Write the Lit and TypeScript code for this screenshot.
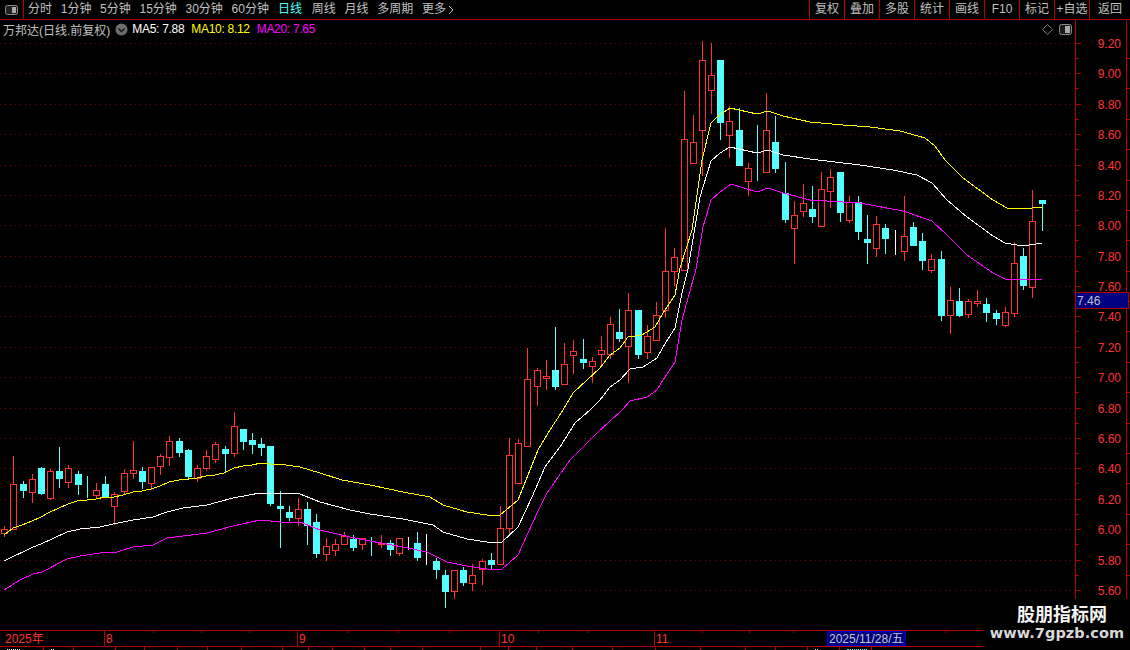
import { LitElement, html, css, svg } from "lit";
import { customElement } from "lit/decorators.js";

type C = [number, number, number, number, string];
const candles: C[] = [
  [526,529,533,536,"r"],[456,484,529,529,"r"],[481,484,490,497,"c"],[474,479,492,502,"r"],[467,468,493,494,"c"],
  [469,471,498,499,"r"],[447,471,478,487,"c"],[465,468,482,487,"r"],[471,474,484,494,"c"],[476,487,488,497,"c"],
  [483,490,495,497,"r"],[476,484,496,497,"c"],[492,494,506,524,"r"],[469,473,491,494,"r"],[441,470,473,478,"r"],
  [467,471,481,488,"c"],[467,467,483,489,"r"],[454,456,466,474,"r"],[436,441,457,465,"r"],[438,441,452,456,"c"],
  [449,450,476,479,"c"],[465,468,478,481,"r"],[450,456,468,470,"r"],[442,444,459,462,"r"],[446,449,453,471,"c"],
  [412,426,453,456,"r"],[429,429,441,449,"c"],[433,440,444,453,"c"],[438,444,447,455,"c"],[446,446,503,505,"c"],
  [491,506,508,547,"c"],[506,512,517,520,"c"],[498,509,518,525,"r"],[502,509,525,544,"c"],[514,522,553,557,"c"],
  [538,546,554,560,"r"],[539,544,550,555,"r"],[532,536,544,544,"r"],[535,539,547,550,"c"],[538,538,544,549,"r"],
  [537,540,541,555,"c"],[535,543,544,547,"r"],[540,543,549,555,"c"],[538,538,553,555,"r"],[537,541,542,549,"w"],
  [532,543,557,560,"c"],[534,557,558,564,"w"],[558,561,569,578,"c"],[570,575,591,607,"c"],[570,570,591,598,"r"],
  [567,570,582,585,"c"],[564,575,583,590,"r"],[559,561,569,584,"r"],[553,560,564,569,"c"],[506,528,564,564,"r"],
  [438,455,528,533,"r"],[439,443,483,483,"r"],[348,379,446,446,"r"],[368,370,386,405,"r"],[360,376,378,389,"r"],
  [327,370,386,389,"c"],[343,364,384,384,"r"],[340,351,355,373,"r"],[339,359,362,368,"c"],[357,361,366,382,"r"],
  [336,350,354,366,"r"],[317,324,354,358,"r"],[309,332,338,341,"c"],[293,310,346,382,"r"],[310,310,354,358,"c"],
  [325,336,352,358,"r"],[302,315,340,340,"r"],[228,271,310,317,"r"],[248,257,271,285,"r"],[91,139,270,270,"r"],
  [115,142,163,163,"r"],[41,60,130,175,"r"],[43,75,90,113,"r"],[60,60,122,139,"c"],[106,121,135,157,"r"],
  [108,130,165,165,"c"],[163,168,181,195,"r"],[125,165,166,180,"c"],[93,130,172,172,"r"],[116,142,168,172,"c"],
  [162,193,219,222,"c"],[201,215,228,263,"r"],[184,203,211,216,"r"],[186,209,216,222,"c"],[172,189,226,226,"r"],
  [169,177,191,207,"r"],[172,172,212,221,"c"],[196,202,220,222,"r"],[196,202,231,239,"c"],[215,239,242,263,"c"],
  [216,224,248,256,"r"],[224,228,238,253,"c"],[230,244,245,254,"w"],[196,236,251,260,"r"],[222,227,245,245,"c"],
  [233,241,260,269,"c"],[254,259,270,272,"r"],[251,259,315,320,"c"],[287,300,315,333,"r"],[288,301,315,316,"c"],
  [299,301,314,317,"r"],[290,301,303,306,"r"],[298,304,312,321,"c"],[310,313,318,324,"c"],[307,312,325,326,"r"],
  [242,263,313,316,"r"],[248,256,285,289,"c"],[190,221,287,297,"r"],[200,200,203,230,"c"],
];

const ma10 = "4,535 13,528 22,525 32,521 41,517 50,512 59,508 68,504 77,501 87,500 96,499 105,497 114,497 123,495 133,492 142,491 151,489 160,486 169,482 179,480 188,479 197,478 206,476 215,475 224,473 234,468 243,466 252,465 261,463 270,464 279,464 300,467 320,473 342,480 370,485 403,492 430,497 443,505 467,512 487,515 500,515 518,500 530,470 538,450 550,430 563,410 573,393 587,380 600,368 610,355 620,348 628,337 642,335 655,327 663,313 675,295 680,268 692,230 702,160 711,123 717,117 730,108 757,114 768,111 783,116 810,122 843,125 870,127 900,131 925,138 935,146 945,160 963,178 993,200 1007,208 1023,209 1042,207";
const ma5 = "4,561 33,547 41,544 67,532 80,529 100,527 113,524 133,520 153,517 167,512 183,508 207,505 233,498 260,493 277,493 300,494 320,502 350,510 370,514 403,519 433,525 443,532 467,539 487,542 502,542 518,527 532,497 545,467 560,447 575,423 590,410 600,400 610,387 620,380 630,369 643,367 657,358 663,347 675,328 682,293 688,269 700,197 711,161 720,153 730,147 757,153 768,150 783,155 810,159 843,163 860,165 893,170 917,175 932,183 947,200 967,217 993,236 1005,243 1023,246 1042,243";
const ma20 = "4,590 20,580 33,574 42,572 67,559 80,556 100,553 117,552 133,547 153,545 167,538 183,536 207,533 233,526 260,520 280,522 300,522 320,530 350,537 370,541 403,547 427,552 447,562 467,566 487,569 502,569 518,555 537,513 547,493 570,460 597,433 622,410 630,401 647,397 657,390 663,380 675,362 682,320 696,269 703,227 711,200 720,192 731,184 757,192 768,188 783,193 810,200 843,202 860,203 903,211 932,221 947,235 967,255 993,273 1005,279 1023,280 1042,279";

const gridYs = [43,73,104,134,165,195,225,256,286,316,347,377,408,438,468,499,529,560,590];
const prices = ["9.20","9.00","8.80","8.60","8.40","8.20","8.00","7.80","7.60","7.40","7.20","7.00","6.80","6.60","6.40","6.20","6.00","5.80","5.60"];
const leftTabs = ["分时","1分钟","5分钟","15分钟","30分钟","60分钟","日线","周线","月线","多周期"];
const rightTabs = ["复权","叠加","多股","统计","画线","F10","标记","+自选","返回"];
const monthLines: [number, string][] = [[104,"8"],[297,"9"],[499,"10"],[654,"11"]];
const timeTicks = [153,201,249,348,398,449,538,587,702,749,793,945];
const tabStops = [43,73,115,144,177,207,241,282,308,332,364,390,422,480,508,536,572,612,655,700,745,775,807,839,871,984];
/* only the top pixel row of the tab captions reaches the photographed area */
const tabTips: Record<number, [number, string]> = { 0: [13, ""], 1: [3, ""], 23: [3, ""], 24: [20, "cy"] };

@customElement("app-root")
export class AppRoot extends LitElement {
  static styles = css`
    :host { display: block; width: 1130px; height: 650px; background: #000; position: relative; overflow: hidden;
      font-family: "Liberation Sans", "Noto Sans CJK SC", sans-serif; font-size: 12px; color: #c0c0c0; }
    .toolbar { display: flex; height: 19px; border-bottom: 1px solid #b00000; align-items: center; }
    .pane { width: 23px; height: 19px; border-right: 1px solid #b00000; display: flex; align-items: center; justify-content: center; flex: none; }
    .tabs { display: flex; gap: 8.7px; margin-left: 4px; line-height: 19px; }
    .tab.on { color: #54ffff; margin: 0 1px 0 .5px; }
    .more { display: flex; align-items: center; gap: 2px; }
    .spacer { flex: 1; }
    .rtabs { display: flex; height: 19px; border-left: 1px solid #b00000; }
    .rtab { width: 34px; border-right: 1px solid #b00000; text-align: center; line-height: 19px; white-space: nowrap; }
    .rtab:last-child { width: 40px; border-right: none; }
    .info { position: absolute; left: 0; top: 20px; width: 1075px; height: 18px; display: flex; align-items: center; box-sizing: border-box; padding: 0 3px; white-space: nowrap; }
    .info .title { margin-right: 5px; }
    .info .m { margin-left: 7px; letter-spacing: -.3px; }
    .info .m.first { margin-left: 4px; }
    .white { color: #fff; } .yellow { color: #ff0; } .magenta { color: #f0f; }
    .info .icons { margin-left: auto; display: flex; align-items: center; gap: 6px; }
    svg { display: block; }
    .grid { stroke: #800000; stroke-width: 1; stroke-dasharray: 1 4; shape-rendering: crispEdges; }
    .axis { stroke: #b00000; stroke-width: 1; fill: none; shape-rendering: crispEdges; }
    .price { fill: #ff3232; font-size: 12px; text-anchor: end; }
    .last { fill: #000080; stroke: #b00000; shape-rendering: crispEdges; }
    .lastt { fill: #c0c0c0; font-size: 12px; }
    .candles { shape-rendering: crispEdges; }
    .r { stroke: #ff3232; fill: none; } .c { stroke: #54ffff; fill: #54ffff; } .w { stroke: #fff; fill: #fff; }
    .ma { fill: none; stroke-width: 1; shape-rendering: crispEdges; }
    .ma.a { stroke: #fff; } .ma.b { stroke: #ff0; } .ma.d { stroke: #f0f; }
    .timeaxis { height: 15px; border-top: 1px solid #b00000; border-bottom: 1px solid #b00000; }
    .tlabel { fill: #ff3232; font-size: 12px; }
    .dbox { fill: #000080; stroke: #0000c8; shape-rendering: crispEdges; }
    .dtext { fill: #c8c8c8; font-size: 12px; }
    .bottom { display: flex; height: 3px; overflow: hidden; }
    .cell { border-right: 1px solid #b00000; box-sizing: border-box; padding: 2px 0 0 7px; flex: none; }
    .tip { display: block; height: 0; border-top: 1px dotted #fff; }
    .tip.cy { border-top-color: #54ffff; }
    .mark { position: absolute; left: 984px; top: 599px; right: 0; bottom: 0; background: #000; display: flex; flex-direction: column; align-items: center; padding-top: 3px; box-sizing: border-box; }
    .mark .cn { font-family: "Noto Sans CJK SC", sans-serif; font-size: 18px; font-weight: 700; color: #f4f4f4; line-height: 22px; padding-left: 10px; }
    .mark .url { font-family: "DejaVu Sans", sans-serif; font-size: 14.5px; font-weight: 700; color: #d8d8d8; line-height: 19px; letter-spacing: .05px; }
  `;

  private cx(i: number) { return Math.round(4.2 + 9.18 * i); }

  private candle(d: C, i: number) {
    const x = this.cx(i) + 0.5;
    const [hi, top, bot, lo, t] = d;
    if (t === "r") {
      return svg`<g class="r">
        <path d="M${x} ${hi}V${top}M${x} ${bot}V${lo + 1}"></path>
        <rect x=${x - 3} y=${top + 0.5} width="6" height=${Math.max(bot - top, 1)}></rect>
      </g>`;
    }
    return svg`<g class=${t}>
      <path d="M${x} ${hi}V${lo + 1}"></path>
      <rect x=${x - 3} y=${top + 0.5} width="6" height=${bot - top - (bot - top > 1 ? 0 : 1)}></rect>
    </g>`;
  }

  render() {
    let prev = 0;
    return html`
      <div class="toolbar">
        <div class="pane">
          <svg width="13" height="10" viewBox="0 0 13 10"><rect x=".5" y=".5" width="12" height="9" rx="2" fill="#222" stroke="#8a8a8a"></rect><rect x="7" y="2" width="4" height="6" fill="#aaa"></rect></svg>
        </div>
        <div class="tabs">
          ${leftTabs.map(t => html`<span class="tab ${t === "日线" ? "on" : ""}">${t}</span>`)}
          <span class="tab more">更多<svg width="6" height="10" viewBox="0 0 6 10"><path d="M1 1l4 4-4 4" fill="none" stroke="#c0c0c0"></path></svg></span>
        </div>
        <div class="spacer"></div>
        <div class="rtabs">${rightTabs.map(t => html`<div class="rtab">${t}</div>`)}</div>
      </div>

      <svg width="1130" height="610" viewBox="0 20 1130 610">
        ${gridYs.map(y => svg`<line class="grid" x1="0" x2="1075" y1=${y + 0.5} y2=${y + 0.5}></line>`)}
        <g class="candles">${candles.map((d, i) => this.candle(d, i))}</g>
        <polyline class="ma a" points=${ma5}></polyline>
        <polyline class="ma b" points=${ma10}></polyline>
        <polyline class="ma d" points=${ma20}></polyline>
        <path class="axis" d="M1075.5 20V630M1126.5 20V630"></path>
        ${gridYs.map((y, i) => svg`
          <path class="axis" d="M1075 ${y + 0.5}H1081M1075 ${y + 15.5}H1079M1126 ${y + 15.5}H1130"></path>
          <text class="price" x="1121" y=${y + 5}>${prices[i]}</text>`)}
        <rect class="last" x="1075.5" y="292.5" width="53" height="16"></rect>
        <text class="lastt" x="1077" y="305">7.46</text>
      </svg>

      <div class="info">
        <span class="title">万邦达(日线.前复权)</span>
        <svg width="13" height="13" viewBox="0 0 13 13"><circle cx="6.5" cy="6.5" r="6" fill="#6e6e6e"></circle><path d="M3.5 5.5l3 3 3-3" fill="none" stroke="#111" stroke-width="1.3"></path></svg>
        <span class="m first white">MA5: 7.88</span>
        <span class="m yellow">MA10: 8.12</span>
        <span class="m magenta">MA20: 7.65</span>
        <span class="icons">
          <svg width="11" height="11" viewBox="0 0 11 11"><path d="M5.5 .5l5 5-5 5-5-5z" fill="none" stroke="#777"></path></svg>
          <svg width="13" height="11" viewBox="0 0 13 11"><rect x=".5" y=".5" width="12" height="10" rx="2" fill="#1a1a1a" stroke="#8a8a8a"></rect><rect x="6" y="2" width="5" height="7" fill="#aaa"></rect></svg>
        </span>
      </div>

      <div class="timeaxis">
        <svg width="1130" height="15" viewBox="0 631 1130 15">
          <text class="tlabel" x="5" y="643">2025年</text>
          ${monthLines.map(([x, t]) => svg`
            <path class="axis" d="M${x + 0.5} 631V646"></path>
            <text class="tlabel" x=${x + 2} y="643">${t}</text>`)}
          ${timeTicks.map(x => svg`<path class="axis" d="M${x + 0.5} 631V633"></path>`)}
          <rect class="dbox" x="827.5" y="631.5" width="78" height="14"></rect>
          <text class="dtext" x="829" y="643">2025/11/28/五</text>
        </svg>
      </div>

      <div class="bottom">
        ${tabStops.map((s, i) => {
          const w = s + 1 - prev;
          prev = s + 1;
          const tip = tabTips[i];
          return html`<div class="cell" style="width:${w}px">${tip ? html`<i class="tip ${tip[1]}" style="width:${tip[0]}px"></i>` : ""}</div>`;
        })}
      </div>

      <div class="mark">
        <div class="cn">股朋指标网</div>
        <div class="url">www.7gpzb.com</div>
      </div>
    `;
  }
}
